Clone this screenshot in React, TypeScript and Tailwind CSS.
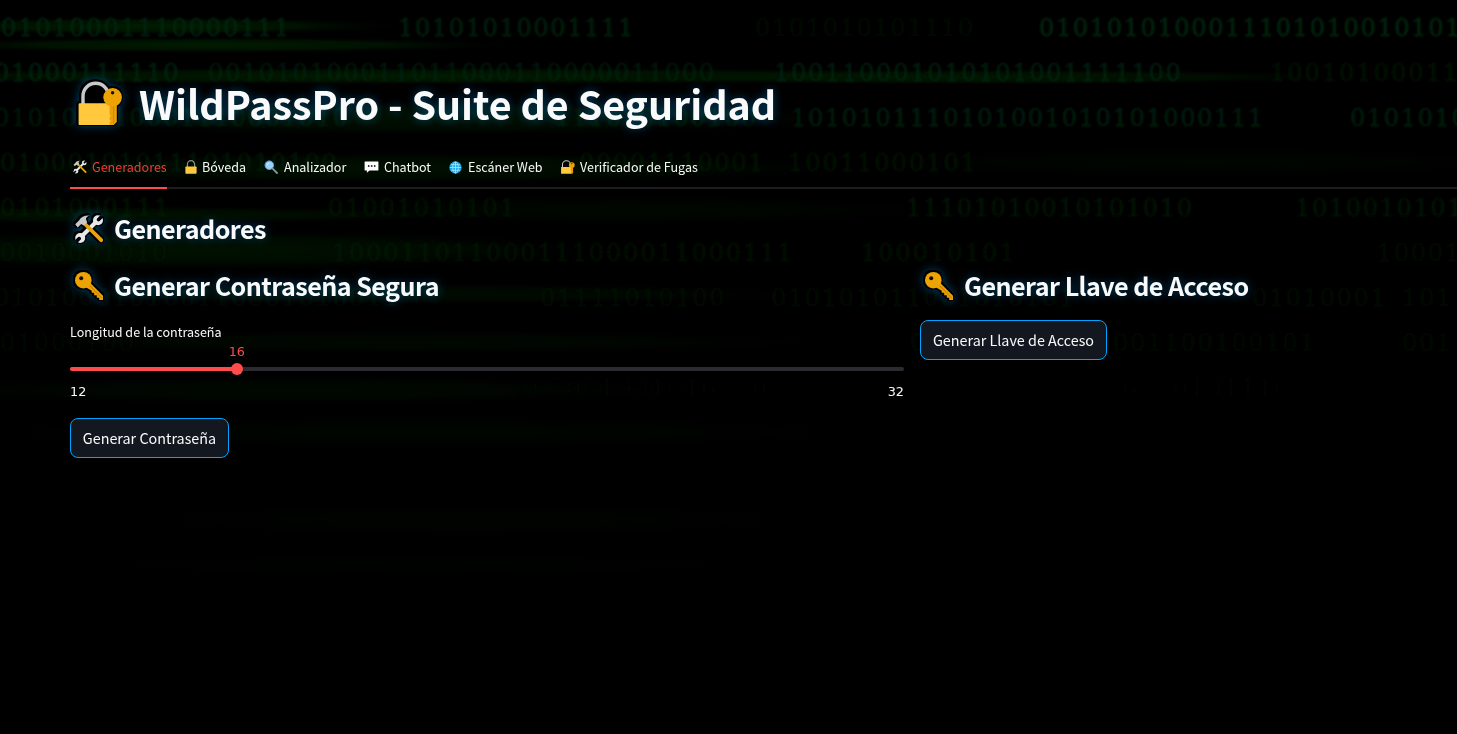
import { useId, type ReactNode } from "react";

const SANS = "font-['Noto_Sans_CJK_JP','Source_Sans_Pro',sans-serif]";

type Run = { x: number; y: number; digits: string; opacity: number; spacing?: number };

const RUNS: Run[] = [
  { x: 1, y: 36, digits: "01010001110000111", opacity: 0.8, spacing: 1.8 },
  { x: 398, y: 36, digits: "10101010001111", opacity: 0.75 },
  { x: 755, y: 36, digits: "0101010101110", opacity: 0.25 },
  { x: 1039, y: 36, digits: "0101010100011101010010101", opacity: 0.9 },
  { x: -6, y: 81, digits: "01000111110", opacity: 0.75 },
  { x: 208, y: 81, digits: "001010100011011000110000011000", opacity: 0.55 },
  { x: 774, y: 81, digits: "100110001010101001111100", opacity: 0.7, spacing: 1.75 },
  { x: 1270, y: 81, digits: "10010100011", opacity: 0.45, spacing: 2 },
  { x: -6, y: 126, digits: "010101010001110001010", opacity: 0.55 },
  { x: 555, y: 126, digits: "111010100100", opacity: 0.5 },
  { x: 791, y: 126, digits: "1010101110101001010101000111", opacity: 0.7 },
  { x: 1350, y: 126, digits: "0101010", opacity: 0.7 },
  { x: 0, y: 171, digits: "01000101011101010100", opacity: 0.5 },
  { x: 579, y: 171, digits: "00001110001", opacity: 0.45 },
  { x: 788, y: 171, digits: "10011000101", opacity: 0.45, spacing: 2 },
  { x: 0, y: 216, digits: "0101000111", opacity: 0.45, spacing: 1.8 },
  { x: 328, y: 216, digits: "01001010101", opacity: 0.4, spacing: 1.9 },
  { x: 906, y: 216, digits: "11101010010101010", opacity: 0.5 },
  { x: 1295, y: 216, digits: "1010010101", opacity: 0.5 },
  { x: 0, y: 261, digits: "0010001010", opacity: 0.3 },
  { x: 332, y: 261, digits: "100011011000111000011000111", opacity: 0.38, spacing: 1.85 },
  { x: 861, y: 261, digits: "100010101", opacity: 0.38, spacing: 2 },
  { x: 1120, y: 261, digits: "110010000110001", opacity: 0.12 },
  { x: 1377, y: 261, digits: "10001", opacity: 0.3 },
  { x: -6, y: 306, digits: "010100010100110001010011", opacity: 0.25 },
  { x: 540, y: 306, digits: "01111010100", opacity: 0.28 },
  { x: 771, y: 306, digits: "010101011001010101", opacity: 0.28 },
  { x: 1252, y: 306, digits: "01010001", opacity: 0.28 },
  { x: 1402, y: 306, digits: "101", opacity: 0.25 },
  { x: 0, y: 351, digits: "01000100", opacity: 0.15 },
  { x: 910, y: 351, digits: "010001100100001100100101", opacity: 0.2 },
  { x: 1402, y: 351, digits: "001", opacity: 0.2 },
  { x: 515, y: 396, digits: "101011001010110", opacity: 0.1 },
  { x: 1105, y: 396, digits: "10110101110", opacity: 0.1 },
];

type Band = { cx: number; cy: number; rx: number; ry: number; opacity: number };

const BANDS: Band[] = [
  { cx: 150, cy: 26, rx: 250, ry: 9, opacity: 1 },
  { cx: 210, cy: 45, rx: 300, ry: 8, opacity: 0.95 },
  { cx: 420, cy: 76, rx: 660, ry: 9, opacity: 0.95 },
  { cx: 980, cy: 77, rx: 380, ry: 8, opacity: 0.8 },
  { cx: 430, cy: 118, rx: 440, ry: 18, opacity: 0.55 },
  { cx: 400, cy: 168, rx: 460, ry: 16, opacity: 0.55 },
  { cx: 1200, cy: 162, rx: 320, ry: 14, opacity: 0.2 },
  { cx: 120, cy: 215, rx: 350, ry: 9, opacity: 0.6 },
  { cx: 620, cy: 210, rx: 320, ry: 14, opacity: 0.25 },
  { cx: 200, cy: 250, rx: 400, ry: 20, opacity: 0.6 },
  { cx: 400, cy: 294, rx: 420, ry: 11, opacity: 0.4 },
  { cx: 400, cy: 342, rx: 420, ry: 12, opacity: 0.28 },
  { cx: 300, cy: 390, rx: 420, ry: 14, opacity: 0.28 },
  { cx: 420, cy: 432, rx: 420, ry: 16, opacity: 0.2 },
  { cx: 470, cy: 520, rx: 320, ry: 16, opacity: 0.14 },
  { cx: 420, cy: 565, rx: 320, ry: 10, opacity: 0.1 },
];

function DigitalRain() {
  return (
    <svg
      aria-hidden="true"
      viewBox="0 0 1457 734"
      className="pointer-events-none absolute inset-0 h-full w-full"
    >
      <defs>
        <radialGradient id="band">
          <stop offset="0" stopColor="#001e00" />
          <stop offset="0.6" stopColor="#001700" stopOpacity="0.8" />
          <stop offset="1" stopColor="#000a00" stopOpacity="0" />
        </radialGradient>
        <filter id="soft">
          <feGaussianBlur stdDeviation="1.3" />
        </filter>
      </defs>
      {BANDS.map((b, i) => (
        <ellipse key={i} {...b} fill="url(#band)" />
      ))}
      <g
        filter="url(#soft)"
        fill="#00280f"
        stroke="#00280f"
        strokeWidth="0.9"
        fontFamily="'DejaVu Serif', serif"
        fontSize="24"
      >
        {RUNS.map((r, i) => (
          <text key={i} x={r.x} y={r.y} opacity={r.opacity} letterSpacing={r.spacing ?? 1.65}>
            {r.digits}
          </text>
        ))}
      </g>
    </svg>
  );
}

const GLOW =
  "[filter:drop-shadow(1.3px_0_0_#000)_drop-shadow(-1.3px_0_0_#000)_drop-shadow(0_1.3px_0_#000)_drop-shadow(0_-1.3px_0_#000)_drop-shadow(0_0_5px_#004068)]";

const TEXT_GLOW = "[text-shadow:0_0_10px_rgba(0,163,255,0.42)]";

function LockKey({ className }: { className: string }) {
  return (
    <svg viewBox="0 0 54 54" className={className} overflow="visible">
      <path d="M11 27V18a12.7 12.7 0 0 1 25.4 0v9z" fill="#000" />
      <path d="M11 27V18a12.7 12.7 0 0 1 25.4 0v9" fill="none" stroke="#c9c9cb" strokeWidth="3.4" />
      <rect x="6.6" y="25.3" width="33" height="21.8" rx="1.2" fill="#ffc83d" />
      <path d="M37.6 27h7.2v17l-3 3h-4.2v-3l1.2-1.4-1.2-1.4v-2l1.2-1.4-1.2-1.4z" fill="#eb9f09" />
      <path d="M41.6 27v19" stroke="#d08700" strokeWidth="1" />
      <circle cx="40.6" cy="19.3" r="9.3" fill="#eda304" />
      <circle cx="40.6" cy="14.7" r="1.7" fill="#111" />
    </svg>
  );
}

function Padlock({ className }: { className: string }) {
  return (
    <svg viewBox="0 0 12 14" className={className}>
      <path d="M2.4 7V4.4a3.6 3.7 0 0 1 7.2 0V7" fill="none" stroke="#8f8f92" strokeWidth="1.2" />
      <rect x="0.4" y="6.6" width="11.2" height="7.2" rx="0.7" fill="#ffc83d" />
    </svg>
  );
}

function Tools({ className }: { className: string }) {
  const cut = useId();
  return (
    <svg viewBox="0 0 30 30" className={className} overflow="visible">
      <mask id={cut}>
        <rect x="-2" y="-2" width="34" height="34" fill="#fff" />
        <path d="M24.6 5.6 30 .2M5.2 24.6l-5.4 5.4" stroke="#000" strokeWidth="3.6" strokeLinecap="round" />
      </mask>
      <g mask={`url(#${cut})`}>
        <path d="M23.5 6.5 6.5 23.5" stroke="#e8e8ea" strokeWidth="4" />
        <circle cx="24" cy="6.2" r="5" fill="#e8e8ea" />
        <circle cx="6.2" cy="24" r="5" fill="#e8e8ea" />
      </g>
      <path d="m10.5 9.5 16.7 16.7" stroke="#eda304" strokeWidth="3.8" strokeLinecap="round" />
      <path
        d="M1.2 10.2 5 6.4C7 3 10.5 1.2 15.5 1.5c-2.2.8-3.4 2-3.6 3.6l1.3 3.2-3.3 3.3-2.7-1.5-3.5 3.4z"
        fill="#c8c8ca"
      />
    </svg>
  );
}

function Key({ className }: { className: string }) {
  return (
    <svg viewBox="0 0 30 30" className={className} overflow="visible">
      <path
        d="M11.8 16.3 16.3 12 29 24.8V29h-3.8v-2.3h-2.4v-2.5h-2.6v-2.4h-2.5v-2z"
        fill="#eda304"
      />
      <path d="m15.5 14.5 12.5 12.6" stroke="#cc8400" strokeWidth="1.1" />
      <circle cx="9.3" cy="9.2" r="8.3" fill="#eda304" />
      <circle cx="7.2" cy="7.2" r="2" fill="#0c0c0c" />
    </svg>
  );
}

function Magnifier({ className }: { className: string }) {
  return (
    <svg viewBox="0 0 14 14" className={className}>
      <path d="m8.6 8.6 4.4 4.4" stroke="#8a8f98" strokeWidth="1.9" strokeLinecap="round" />
      <circle cx="5.3" cy="5.2" r="4.3" fill="#9bd0f7" stroke="#5b9fd4" strokeWidth="1" />
      <path d="M3.2 5.4a2.4 2.4 0 0 1 2-2.2" fill="none" stroke="#d4edff" strokeWidth="1" />
    </svg>
  );
}

function Bubble({ className }: { className: string }) {
  return (
    <svg viewBox="0 0 14 12" className={className}>
      <path
        d="M.6.5h12.8a.5.5 0 0 1 .5.5v8a.5.5 0 0 1-.5.5H5L2.4 11.7V9.5H.6a.5.5 0 0 1-.5-.5V1a.5.5 0 0 1 .5-.5z"
        fill="#fff"
      />
      <g fill="#222">
        <circle cx="4.2" cy="5" r=".9" />
        <circle cx="7.2" cy="5" r=".9" />
        <circle cx="10.2" cy="5" r=".9" />
      </g>
    </svg>
  );
}

function Globe({ className }: { className: string }) {
  return (
    <svg viewBox="0 0 14 14" className={className}>
      <circle cx="7" cy="7" r="6.6" fill="#13a9ea" />
      <g fill="none" stroke="#b9ebff" strokeWidth=".8">
        <ellipse cx="7" cy="7" rx="3" ry="6" />
        <path d="M7 1v12M1 7h12M2 4h10M2 10h10" />
      </g>
    </svg>
  );
}

type TabItem = { label: string; icon: ReactNode; box: string; iconBox: string };

const TABS: TabItem[] = [
  { label: "Generadores", icon: <Tools className="h-3.5 w-3.5" />, box: "w-[97px]", iconBox: "w-[22px] pl-[3px]" },
  { label: "Bóveda", icon: <Padlock className="h-3.5 w-3" />, box: "w-[63px]", iconBox: "w-[19px] pl-[2px]" },
  { label: "Analizador", icon: <Magnifier className="h-3.5 w-3.5" />, box: "w-[84px]", iconBox: "w-[22px] pl-[2px]" },
  { label: "Chatbot", icon: <Bubble className="h-3 w-[15px]" />, box: "w-[69px]", iconBox: "w-[22px] pl-[2px]" },
  { label: "Escáner Web", icon: <Globe className="h-[13px] w-[13px]" />, box: "w-[95px]", iconBox: "w-[21px] pl-[2px]" },
  { label: "Verificador de Fugas", icon: <LockKey className="h-[17px] w-[17px]" />, box: "w-[139px]", iconBox: "w-[22px] pl-[1px]" },
];

function Tabs() {
  return (
    <nav className="mt-[25px] flex h-[42px] gap-4 border-b-2 border-[#1c1c1c]">
      {TABS.map((tab, i) => (
        <button
          key={tab.label}
          className={`flex h-[42px] shrink-0 items-center whitespace-nowrap border-b-2 text-[12.55px] leading-5 ${tab.box} ${
            i === 0 ? "border-[#ff4b4b] text-[#f23b38]" : "border-transparent text-[#fafafa]"
          }`}
        >
          <span className={`flex shrink-0 justify-start ${tab.iconBox}`}>{tab.icon}</span>
          <span className="-mt-px">{tab.label}</span>
        </button>
      ))}
    </nav>
  );
}

function Heading({ icon, children }: { icon: ReactNode; children: ReactNode }) {
  return (
    <h2 className="flex h-9 items-center pl-1 text-[25.1px] font-semibold leading-9 tracking-[-0.53px] text-[#fafafa]">
      <span className={`mr-[10px] mt-px shrink-0 ${GLOW}`}>{icon}</span>
      <span className={`whitespace-nowrap ${TEXT_GLOW}`}>{children}</span>
    </h2>
  );
}

function ActionButton({ children, box }: { children: ReactNode; box: string }) {
  return (
    <button
      className={`flex h-10 items-center justify-center whitespace-nowrap rounded-lg border border-[#00a3ff] bg-[#131720] text-[14.35px] leading-6 text-[#fafafa] ${box}`}
    >
      {children}
    </button>
  );
}

function LengthSlider() {
  const min = 12;
  const max = 32;
  const value = 16;
  const percent = `${((value - min) / (max - min)) * 100}%`;
  return (
    <div className="mt-[19px]">
      <label className="block h-5 whitespace-nowrap text-[12.55px] leading-5 text-[#fafafa]">
        Longitud de la contraseña
      </label>
      <div className="relative mt-[25px] h-1 rounded-full bg-[#2b2b31]">
        <div className="h-1 rounded-full bg-[#ff4b4b]" style={{ width: percent }} />
        <div
          className="absolute top-1/2 h-3 w-3 -translate-x-1/2 -translate-y-1/2 rounded-full bg-[#ff4b4b]"
          style={{ left: percent }}
        />
        <span
          className="absolute -top-[25px] -translate-x-1/2 font-['DejaVu_Sans',sans-serif] text-[12.8px] leading-5 text-[#ff4b4b]"
          style={{ left: percent }}
        >
          {value}
        </span>
      </div>
      <div className="mt-[11px] flex h-5 justify-between font-['DejaVu_Sans',sans-serif] text-[12.8px] leading-5 text-[#fafafa]">
        <span>{min}</span>
        <span>{max}</span>
      </div>
    </div>
  );
}

export default function App() {
  return (
    <div className={`relative h-[734px] w-full overflow-hidden bg-black ${SANS}`}>
      <DigitalRain />
      <main className="relative pl-[70px] pt-[82px]">
        <h1 className="flex h-10 items-center pl-[2px] text-[39.4px] font-bold leading-10 tracking-[-0.03px] text-[#fafafa]">
          <LockKey className={`mr-[13px] mt-1.5 h-[54px] w-[54px] shrink-0 ${GLOW}`} />
          <span className={`mt-px whitespace-nowrap ${TEXT_GLOW}`}>WildPassPro - Suite de Seguridad</span>
        </h1>
        <Tabs />
        <div className="mt-[21px]">
          <Heading icon={<Tools className="h-[30px] w-[30px]" />}>Generadores</Heading>
        </div>
        <div className="mt-[21px] flex gap-4">
          <section className="w-[834px] shrink-0">
            <Heading icon={<Key className="h-[30px] w-[30px]" />}>Generar Contraseña Segura</Heading>
            <LengthSlider />
            <div className="mt-4">
              <ActionButton box="w-[159px]">Generar Contraseña</ActionButton>
            </div>
          </section>
          <section className="min-w-0 flex-1">
            <Heading icon={<Key className="h-[30px] w-[30px]" />}>Generar Llave de Acceso</Heading>
            <div className="mt-[17px]">
              <ActionButton box="w-[187px] pb-px">Generar Llave de Acceso</ActionButton>
            </div>
          </section>
        </div>
      </main>
    </div>
  );
}
